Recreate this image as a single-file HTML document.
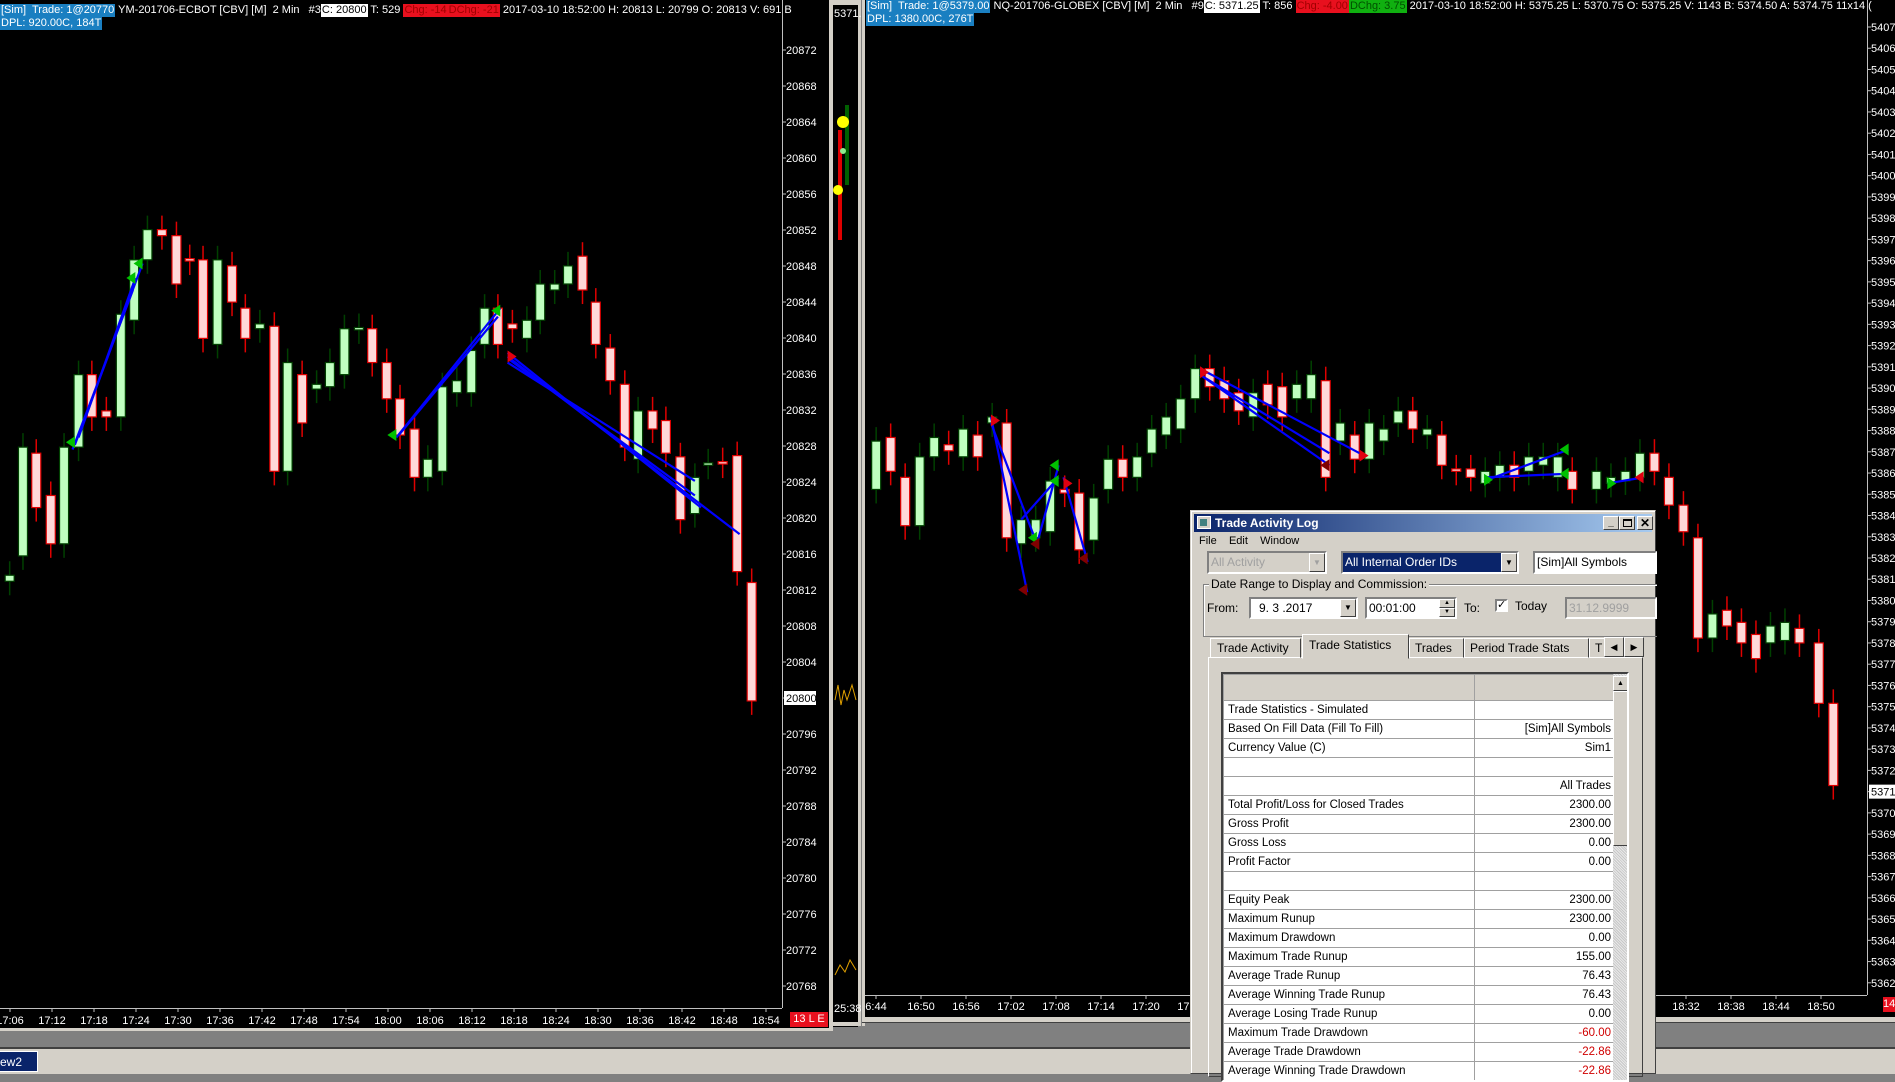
<!DOCTYPE html>
<html><head><meta charset="utf-8">
<style>
*{margin:0;padding:0;box-sizing:border-box}
body{width:1895px;height:1074px;background:#808080;position:relative;overflow:hidden;font-family:"Liberation Sans",sans-serif}
.a{position:absolute}
.hdr{position:absolute;font-size:11px;line-height:13px;color:#fff;white-space:nowrap}
.hdr span{display:inline-block;padding:0 1px}
.blue{background:#1a7fc1}
.wh{background:#fff;color:#000}
.rd{background:#e8101e;color:#a00000}
.gr{background:#10b010;color:#005000}
.dlg{font-size:12px;color:#000}
.btn3d{background:#d4d0c8;border:1px solid;border-color:#fff #404040 #404040 #fff}
.sunk{border:2px solid;border-color:#808080 #fff #fff #808080}
table{border-collapse:collapse}
td{border:1px solid #a0a0a0;height:19px;font-size:11.5px;padding:0 4px;white-space:nowrap;background:#fff}
</style></head><body>
<!-- left chart -->
<div class="a" style="left:0;top:0;width:829px;height:1028px;background:#000"></div>
<div class="a" style="left:829px;top:0;width:4px;height:1031px;background:#d4d0c8"></div>
<div class="a" style="left:0;top:1028px;width:833px;height:3px;background:#d4d0c8"></div>
<div class="a" style="left:0;top:1047px;width:1895px;height:2px;background:#404040"></div>
<div class="a" style="left:0;top:1049px;width:1895px;height:25px;background:#d4d0c8"></div>
<div class="a" style="left:0;top:1051px;width:38px;height:21px;background:#0a246a;color:#fff;font-size:12px;line-height:21px;border:1px solid #fff;border-left:none">ew2</div>
<!-- middle strip -->
<div class="a" style="left:833px;top:0;width:25px;height:5px;background:#d4d0c8"></div>
<div class="a" style="left:833px;top:5px;width:25px;height:1022px;background:#000"></div>
<div class="a" style="left:858px;top:0;width:7px;height:1026px;background:#d4d0c8"></div>
<div class="a" style="left:861px;top:0;width:1px;height:1026px;background:#808080"></div>
<div class="a" style="left:833px;top:1022px;width:28px;height:4px;background:#d4d0c8"></div>
<div class="hdr" style="left:834px;top:8px">5371.</div>
<div class="hdr" style="left:834px;top:1003px">25:38</div>
<!-- right chart -->
<div class="a" style="left:865px;top:0;width:1030px;height:1017px;background:#000"></div>
<div class="a" style="left:862px;top:1017px;width:1033px;height:5px;background:#d4d0c8"></div>
<div class="a" style="left:862px;top:1022px;width:1033px;height:1px;background:#404040"></div>

<svg class="a" style="left:0;top:0" width="1895" height="1074" id="sv"></svg>

<div class="hdr" style="left:0;top:4px"><span class="blue">[Sim]&nbsp; Trade: 1@20770</span> YM-201706-ECBOT [CBV] [M]&nbsp; 2 Min&nbsp;&nbsp; #3<span class="wh">C: 20800</span> T: 529 <span class="rd">Chg: -14</span><span class="rd">DChg: -21</span> 2017-03-10 18:52:00 H: 20813 L: 20799 O: 20813 V: 691 B</div>
<div class="hdr" style="left:0;top:17px"><span class="blue">DPL: 920.00C, 184T</span></div>
<div class="hdr" style="left:866px;top:0px"><span class="blue">[Sim]&nbsp; Trade: 1@5379.00</span> NQ-201706-GLOBEX [CBV] [M]&nbsp; 2 Min&nbsp;&nbsp; #9<span class="wh">C: 5371.25</span> T: 856 <span class="rd">Chg: -4.00</span><span class="gr">DChg: 3.75</span> 2017-03-10 18:52:00 H: 5375.25 L: 5370.75 O: 5375.25 V: 1143 B: 5374.50 A: 5374.75 11x14 (</div>
<div class="hdr" style="left:866px;top:13px"><span class="blue">DPL: 1380.00C, 276T</span></div>
<div class="a" style="left:790px;top:1012px;width:38px;height:15px;background:#e8101e;color:#fff;font-size:11px;line-height:15px;text-align:center">13 L E</div>
<div class="a" style="left:1883px;top:997px;width:12px;height:15px;background:#e8101e;color:#fff;font-size:11px;line-height:15px">14</div>

<!-- dialog -->
<div class="a dlg" style="left:1190px;top:510px;width:466px;height:564px;background:#d4d0c8;border:1px solid;border-color:#d4d0c8 #404040 #404040 #d4d0c8;box-shadow:inset 1px 1px #fff">
 <div class="a" style="left:3px;top:3px;width:458px;height:18px;background:linear-gradient(90deg,#0a246a,#a6caf0)"></div>
 <div class="a" style="left:6px;top:5px;width:14px;height:13px;background:#d4d0c8;border:1px solid #fff"><div style="margin:2px;width:7px;height:7px;background:#408080"></div></div>
 <div class="a" style="left:24px;top:4px;color:#fff;font-weight:bold;font-size:12px;line-height:16px">Trade Activity Log</div>
 <div class="a btn3d" style="left:412px;top:5px;width:16px;height:14px;font-size:10px;text-align:center;line-height:12px;font-weight:bold">_</div>
 <div class="a btn3d" style="left:428px;top:5px;width:16px;height:14px"><div style="margin:2px 3px;width:9px;height:8px;border:1px solid #000;border-top-width:2px"></div></div>
 <div class="a btn3d" style="left:446px;top:5px;width:16px;height:14px;font-size:12px;text-align:center;line-height:12px;font-weight:bold">✕</div>
 <div class="a" style="left:8px;top:23px;font-size:11px;line-height:14px">File&nbsp;&nbsp;&nbsp; Edit&nbsp;&nbsp;&nbsp; Window</div>
 <div class="a sunk" style="left:16px;top:40px;width:120px;height:23px;background:#d4d0c8;color:#a0a0a0;padding-left:2px;line-height:18px">All Activity<div class="a btn3d" style="right:0;top:0;width:16px;height:19px;color:#a0a0a0;font-size:8px;text-align:center;line-height:17px">▼</div></div>
 <div class="a sunk" style="left:150px;top:40px;width:178px;height:23px;background:#fff;line-height:18px"><div style="background:#0a246a;color:#fff;width:158px;padding-left:2px;height:19px">All Internal Order IDs</div><div class="a btn3d" style="right:0;top:0;width:16px;height:19px;font-size:8px;text-align:center;line-height:17px">▼</div></div>
 <div class="a sunk" style="left:342px;top:40px;width:124px;height:23px;background:#fff;padding-left:2px;line-height:18px">[Sim]All Symbols</div>
 <div class="a" style="left:12px;top:73px;width:454px;height:53px;border:1px solid #808080;border-right:none;box-shadow:1px 1px #fff inset"></div>
 <div class="a" style="left:18px;top:65px;background:#d4d0c8;padding:0 2px;line-height:16px">Date Range to Display and Commission:</div>
 <div class="a" style="left:16px;top:89px;line-height:16px">From:</div>
 <div class="a sunk" style="left:58px;top:86px;width:109px;height:22px;background:#fff;padding-left:8px;line-height:18px">9. 3 .2017<div class="a btn3d" style="right:0;top:0;width:16px;height:18px;font-size:8px;text-align:center;line-height:16px">▼</div></div>
 <div class="a sunk" style="left:174px;top:86px;width:92px;height:22px;background:#fff;padding-left:2px;line-height:18px">00:01:00<div class="a btn3d" style="right:0;top:0;width:16px;height:9px;font-size:6px;text-align:center;line-height:7px">▲</div><div class="a btn3d" style="right:0;top:9px;width:16px;height:9px;font-size:6px;text-align:center;line-height:7px">▼</div></div>
 <div class="a" style="left:273px;top:89px;line-height:16px">To:</div>
 <div class="a sunk" style="left:304px;top:88px;width:13px;height:13px;background:#fff;font-size:11px;line-height:9px;text-align:center">✓</div>
 <div class="a" style="left:324px;top:87px;line-height:16px">Today</div>
 <div class="a sunk" style="left:374px;top:86px;width:92px;height:22px;background:#d4d0c8;color:#a0a0a0;padding-left:2px;line-height:18px">31.12.9999</div>
 <!-- tabs -->
 <div class="a" style="left:17px;top:146px;width:435px;height:420px;border:1px solid;border-color:#fff #404040 #404040 #fff"></div>
 <div class="a" style="left:19px;top:127px;width:91px;height:20px;border:1px solid;border-color:#fff #404040 transparent #fff;line-height:18px;padding-left:6px">Trade Activity</div>
 <div class="a" style="left:111px;top:123px;width:107px;height:25px;background:#d4d0c8;border:1px solid;border-color:#fff #404040 transparent #fff;line-height:20px;padding-left:6px">Trade Statistics</div>
 <div class="a" style="left:218px;top:127px;width:55px;height:20px;border:1px solid;border-color:#fff #404040 transparent #fff;line-height:18px;padding-left:5px">Trades</div>
 <div class="a" style="left:273px;top:127px;width:125px;height:20px;border:1px solid;border-color:#fff #404040 transparent #fff;line-height:18px;padding-left:5px">Period Trade Stats</div>
 <div class="a" style="left:398px;top:127px;width:20px;height:20px;border:1px solid;border-color:#fff transparent transparent #fff;line-height:18px;padding-left:5px">T</div>
 <div class="a btn3d" style="left:413px;top:126px;width:20px;height:20px;font-size:9px;text-align:center;line-height:18px">◀</div>
 <div class="a btn3d" style="left:433px;top:126px;width:20px;height:20px;font-size:9px;text-align:center;line-height:18px">▶</div>
 <!-- table -->
 <div class="a" style="left:30px;top:161px;width:408px;height:410px;border:2px solid;border-color:#404040 #fff #fff #404040;background:#d4d0c8;overflow:hidden">
  <table style="width:392px;table-layout:fixed">
   <colgroup><col style="width:251px"><col style="width:141px"></colgroup>
   <tr><td style="height:26px;background:#d4d0c8"></td><td style="background:#d4d0c8"></td></tr>
   <tr><td>Trade Statistics - Simulated</td><td></td></tr>
   <tr><td>Based On Fill Data (Fill To Fill)</td><td align="right">[Sim]All Symbols</td></tr>
   <tr><td>Currency Value (C)</td><td align="right">Sim1</td></tr>
   <tr><td></td><td></td></tr>
   <tr><td></td><td align="right">All Trades</td></tr>
   <tr><td>Total Profit/Loss for Closed Trades</td><td align="right">2300.00</td></tr>
   <tr><td>Gross Profit</td><td align="right">2300.00</td></tr>
   <tr><td>Gross Loss</td><td align="right">0.00</td></tr>
   <tr><td>Profit Factor</td><td align="right">0.00</td></tr>
   <tr><td></td><td></td></tr>
   <tr><td>Equity Peak</td><td align="right">2300.00</td></tr>
   <tr><td>Maximum Runup</td><td align="right">2300.00</td></tr>
   <tr><td>Maximum Drawdown</td><td align="right">0.00</td></tr>
   <tr><td>Maximum Trade Runup</td><td align="right">155.00</td></tr>
   <tr><td>Average Trade Runup</td><td align="right">76.43</td></tr>
   <tr><td>Average Winning Trade Runup</td><td align="right">76.43</td></tr>
   <tr><td>Average Losing Trade Runup</td><td align="right">0.00</td></tr>
   <tr><td>Maximum Trade Drawdown</td><td align="right" style="color:#d00000">-60.00</td></tr>
   <tr><td>Average Trade Drawdown</td><td align="right" style="color:#d00000">-22.86</td></tr>
   <tr><td>Average Winning Trade Drawdown</td><td align="right" style="color:#d00000">-22.86</td></tr>
  </table>
  <div class="a" style="left:390px;top:0;width:16px;height:410px;background:repeating-linear-gradient(45deg,#e8e8e8 0 1px,#c8c8c8 1px 2px)"></div>
  <div class="a btn3d" style="left:390px;top:2px;width:15px;height:15px;font-size:7px;text-align:center;line-height:13px">▲</div>
  <div class="a btn3d" style="left:390px;top:17px;width:15px;height:155px"></div>
 </div>
</div>

<script>
const S=1.2085,NS="http://www.w3.org/2000/svg",sv=document.getElementById('sv');
function el(t,a,txt){const e=document.createElementNS(NS,t);for(const k in a)e.setAttribute(k,a[k]);if(txt!==undefined)e.textContent=txt;sv.appendChild(e);return e;}
// axes
el('line',{x1:782.5,y1:0,x2:782.5,y2:1008,stroke:'#c0c0c0'});
el('line',{x1:0,y1:1008.5,x2:782,y2:1008.5,stroke:'#c0c0c0'});
for(let i=0;i<=26;i++){const p=20872-4*i,y=50+i*36;el('line',{x1:782,y1:y,x2:786,y2:y,stroke:'#c0c0c0'});
 if(p===20800){el('rect',{x:784,y:y-7,width:32,height:14,fill:'#fff'});el('text',{x:786,y:y+4,fill:'#000','font-size':11,'font-family':'Liberation Sans'},p);}
 else el('text',{x:786,y:y+4,fill:'#fff','font-size':11,'font-family':'Liberation Sans'},p);}
let t=17*60+6;for(let k=0;k<=18;k++){const x=10+k*42,m=t+6*k;el('line',{x1:x,y1:1008,x2:x,y2:1012,stroke:'#c0c0c0'});
 el('text',{x:x,y:1024,fill:'#fff','font-size':11,'text-anchor':'middle','font-family':'Liberation Sans'},Math.floor(m/60)+':'+String(m%60).padStart(2,'0'));}
el('line',{x1:1867.5,y1:0,x2:1867.5,y2:995,stroke:'#c0c0c0'});
el('line',{x1:865,y1:995.5,x2:1867,y2:995.5,stroke:'#c0c0c0'});
for(let i=0;i<=45;i++){const p=5407-i,y=27+i*21.24;el('line',{x1:1867,y1:y,x2:1871,y2:y,stroke:'#c0c0c0'});
 if(p===5371){el('rect',{x:1869,y:y-7,width:26,height:14,fill:'#fff'});el('text',{x:1871,y:y+4,fill:'#000','font-size':11,'font-family':'Liberation Sans'},p);}
 else el('text',{x:1871,y:y+4,fill:'#fff','font-size':11,'font-family':'Liberation Sans'},p);}
t=16*60+44;for(let k=0;k<=21;k++){const x=876+k*45,m=t+6*k;el('line',{x1:x,y1:995,x2:x,y2:999,stroke:'#c0c0c0'});
 el('text',{x:x,y:1010,fill:'#fff','font-size':11,'text-anchor':'middle','font-family':'Liberation Sans'},(k==0?'6:44':Math.floor(m/60)+':'+String(m%60).padStart(2,'0')));}
function candle(x,a,b,c){x*=S;a*=S;b*=S;const up=c=='g';const st=up?'#004000':'#e00000';
 el('line',{x1:x,y1:a-14,x2:x,y2:b+14,stroke:st,'stroke-width':1.5});
 el('rect',{x:x-4.5,y:a,width:9,height:Math.max(2,b-a),fill:up?'#c0ffc0':'#ffd8d8',stroke:st,'stroke-width':1.2});}
const L=[[8,476,481,'g'],[19,370,460,'g'],[30,375,420,'r'],[42,410,450,'r'],[53,370,450,'g'],[65,310,370,'g'],[76,310,345,'r'],[88,340,345,'r'],[100,260,345,'g'],[111,215,265,'g'],[122,190,215,'g'],[134,190,195,'r'],[146,195,235,'r'],[157,214,216,'r'],[168,215,280,'r'],[180,215,285,'g'],[192,220,250,'r'],[203,255,280,'r'],[215,268,272,'g'],[227,270,390,'r'],[238,300,390,'g'],[250,310,350,'r'],[262,318,322,'g'],[273,300,320,'g'],[285,272,310,'g'],[297,271,273,'g'],[308,272,300,'r'],[320,300,330,'r'],[331,330,360,'r'],[343,355,395,'r'],[354,380,395,'g'],[366,320,390,'g'],[378,315,325,'g'],[390,290,325,'g'],[401,255,285,'g'],[412,255,285,'r'],[424,268,272,'r'],[436,265,280,'g'],[447,235,265,'g'],[459,235,240,'g'],[470,220,235,'g'],[482,212,240,'r'],[493,250,285,'r'],[505,288,315,'r'],[517,318,370,'r'],[528,340,380,'g'],[540,340,355,'r'],[551,348,375,'r'],[563,378,430,'r'],[575,395,425,'g'],[586,383,385,'g'],[598,382,384,'r'],[610,377,473,'r'],[622,482,580,'r']];
L.forEach(d=>candle(...d));
const R=[[725,365,405,'g'],[737,362,390,'r'],[749,395,435,'r'],[761,378,435,'g'],[773,362,378,'g'],[785,368,373,'r'],[797,355,378,'g'],[809,360,378,'r'],[821,345,350,'g'],[833,350,445,'r'],[845,430,450,'g'],[857,430,445,'g'],[869,398,440,'g'],[881,405,408,'r'],[893,408,455,'r'],[905,412,447,'g'],[917,380,405,'g'],[929,380,395,'r'],[941,378,395,'g'],[953,355,375,'g'],[965,345,360,'g'],[977,330,355,'g'],[989,305,330,'g'],[1001,305,320,'r'],[1013,315,330,'r'],[1025,325,340,'r'],[1037,325,345,'g'],[1049,318,335,'r'],[1061,320,345,'r'],[1073,318,330,'g'],[1085,310,330,'g'],[1097,315,395,'r'],[1109,350,365,'g'],[1121,360,380,'r'],[1133,350,380,'g'],[1145,355,365,'g'],[1157,340,350,'g'],[1169,340,355,'r'],[1181,355,360,'g'],[1193,360,385,'r'],[1205,388,390,'r'],[1217,388,395,'r'],[1229,390,400,'g'],[1241,385,395,'g'],[1253,385,395,'r'],[1265,378,390,'g'],[1277,378,385,'g'],[1289,378,395,'g'],[1301,390,405,'r'],[1321,390,405,'g'],[1333,395,400,'g'],[1345,390,398,'g'],[1357,375,395,'g'],[1369,375,390,'r'],[1381,395,418,'r'],[1393,418,440,'r'],[1405,445,528,'r'],[1417,508,528,'g'],[1429,505,518,'r'],[1441,515,532,'r'],[1453,525,545,'r'],[1465,518,532,'g'],[1477,515,530,'g'],[1489,520,532,'r'],[1505,532,582,'r'],[1517,582,650,'r']];
R.forEach(d=>candle(...d));
function ln(a,b,c,d){el('line',{x1:a*S,y1:b*S,x2:c*S,y2:d*S,stroke:'#0000ff','stroke-width':2.2});}
[[62,368,118,218],[65,362,112,230],[60,372,110,240],[328,362,414,255],[330,360,412,262],[420,295,612,442],[422,298,575,410],[420,292,580,420],[420,300,575,398],
 [820,345,850,490],[820,350,858,450],[858,450,876,385],[845,430,876,395],[880,395,900,465],[993,310,1100,385],[993,305,1125,375],[996,312,1100,375],[1228,398,1298,372],[1228,395,1298,392],[1330,400,1360,395]].forEach(d=>ln(...d));
function tri(x,y,dir,col){x*=S;y*=S;const p=dir>0?`${x},${y-6} ${x+9},${y} ${x},${y+6}`:`${x},${y-6} ${x-9},${y} ${x},${y+6}`;el('polygon',{points:p,fill:col});}
[[62,366,-1],[112,230,-1],[118,218,-1],[328,360,-1],[414,257,-1],[876,385,-1],[876,398,-1],[858,445,-1],[1228,397,1],[1298,372,-1],[1298,392,-1],[1330,400,1]].forEach(d=>tri(d[0],d[1],d[2],'#00c000'));
[[420,295,1],[820,348,1],[880,400,1],[993,308,1],[1125,377,1],[1360,395,-1]].forEach(d=>tri(d[0],d[1],d[2],'#e00010'));
[[850,488,-1],[860,450,-1],[900,462,-1],[1100,385,-1]].forEach(d=>tri(d[0],d[1],d[2],'#800000'));
// middle strip small stuff
el('rect',{x:838,y:130,width:4,height:110,fill:'#e00000'});el('rect',{x:845,y:105,width:4,height:80,fill:'#006000'});
el('circle',{cx:843,cy:122,r:6,fill:'#ffff00'});el('circle',{cx:838,cy:190,r:5,fill:'#ffff00'});el('circle',{cx:843,cy:151,r:3,fill:'#90ee90'});
el('polyline',{points:'835,700 838,685 841,705 844,690 847,700 852,685 856,700',fill:'none',stroke:'#e0a000'});
el('polyline',{points:'835,975 840,965 845,972 850,960 856,970',fill:'none',stroke:'#e0a000'});
</script>
</body></html>
